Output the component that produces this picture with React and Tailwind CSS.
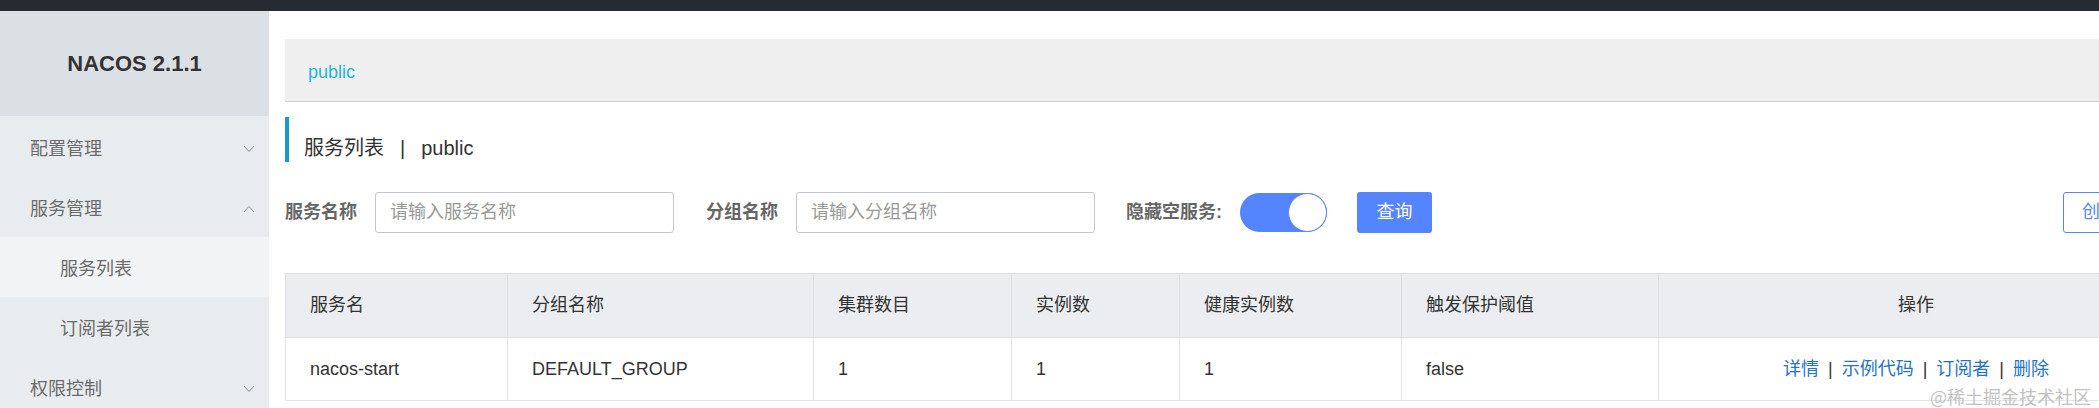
import React from "react";

const menu = [
  { label: "配置管理", chevron: "down" },
  { label: "服务管理", chevron: "up" },
  { label: "服务列表", sub: true, active: true },
  { label: "订阅者列表", sub: true },
  { label: "权限控制", chevron: "down" },
];

const columns = [
  { title: "服务名", w: "w-[222px]" },
  { title: "分组名称", w: "w-[306px]" },
  { title: "集群数目", w: "w-[198px]" },
  { title: "实例数", w: "w-[168px]" },
  { title: "健康实例数", w: "w-[222px]" },
  { title: "触发保护阈值", w: "w-[257px]" },
  { title: "操作", w: "w-[515px]", center: true },
];

const rows = [
  { name: "nacos-start", group: "DEFAULT_GROUP", clusters: 1, instances: 1, healthy: 1, threshold: "false" },
];

function Chevron({ dir }) {
  return (
    <svg width="12" height="8" viewBox="0 0 12 8" className="text-[#8c8c8c]">
      {dir === "up" ? (
        <polyline points="1,7 6,1.5 11,7" fill="none" stroke="currentColor" strokeWidth="1" />
      ) : (
        <polyline points="1,1 6,6.5 11,1" fill="none" stroke="currentColor" strokeWidth="1" />
      )}
    </svg>
  );
}

function Sidebar() {
  return (
    <aside className="w-[269px] shrink-0 flex flex-col bg-[#e9ecef]">
      <div className="h-[105px] shrink-0 bg-[#dbe0e4] flex items-center justify-center text-[22px] font-bold text-[#333]">
        NACOS 2.1.1
      </div>
      <nav className="pt-[1px] text-[18px] text-[#6b6b6b]">
        {menu.map((m) => (
          <div
            key={m.label}
            className={`h-[60px] pt-[4px] flex items-center justify-between pr-[14px] ${
              m.sub ? "pl-[60px]" : "pl-[30px]"
            } ${m.active ? "bg-[#f1f3f5]" : ""}`}
          >
            <span>{m.label}</span>
            {m.chevron && <Chevron dir={m.chevron} />}
          </div>
        ))}
      </nav>
    </aside>
  );
}

function Toggle() {
  return (
    <div className="w-[87px] h-[39px] rounded-full bg-[#5584ff] flex items-center justify-end">
      <div className="w-[39px] h-[39px] rounded-full bg-white border border-[#5584ff]" />
    </div>
  );
}

function Filters() {
  return (
    <div className="mt-[30px] h-[41px] flex items-center justify-between">
      <div className="flex items-center">
        <span className="text-[18px] font-bold text-[#666] mr-[18px]">服务名称</span>
        <div className="w-[299px] h-[41px] border border-[#c4c6cf] rounded-[3px] flex items-center pl-[14px] text-[18px] text-[#999]">
          请输入服务名称
        </div>
        <span className="ml-[32px] text-[18px] font-bold text-[#666] mr-[18px]">分组名称</span>
        <div className="w-[299px] h-[41px] border border-[#c4c6cf] rounded-[3px] flex items-center pl-[14px] text-[18px] text-[#999]">
          请输入分组名称
        </div>
        <span className="ml-[31px] text-[18px] font-bold text-[#666] mr-[18px]">隐藏空服务:</span>
        <Toggle />
        <button className="ml-[30px] w-[75px] h-[41px] rounded-[3px] bg-[#5584ff] text-white text-[18px]">查询</button>
      </div>
      <button className="h-[41px] px-[18px] rounded-[3px] border border-[#5584ff] text-[#5584ff] text-[18px]">
        创建服务
      </button>
    </div>
  );
}

function Actions() {
  const items = ["详情", "示例代码", "订阅者", "删除"];
  return (
    <div className="flex items-center justify-center">
      {items.map((t, i) => (
        <React.Fragment key={t}>
          {i > 0 && <span className="mx-[9px] text-[#333]">|</span>}
          <span className="text-[#1f74c4]">{t}</span>
        </React.Fragment>
      ))}
    </div>
  );
}

function ServiceTable() {
  return (
    <table className="mt-[40px] w-full table-fixed border-collapse text-[18px] text-[#333]">
      <colgroup>
        {columns.map((c) => (
          <col key={c.title} className={c.w} />
        ))}
      </colgroup>
      <thead>
        <tr className="h-[64px] bg-[#ebedf0]">
          {columns.map((c) => (
            <th
              key={c.title}
              className={`border border-[#dcdee3] font-normal ${c.center ? "text-center" : "text-left pl-[24px]"}`}
            >
              {c.title}
            </th>
          ))}
        </tr>
      </thead>
      <tbody>
        {rows.map((r) => (
          <tr key={r.name} className="h-[63px]">
            <td className="border border-[#e3e5e9] pl-[24px]">{r.name}</td>
            <td className="border border-[#e3e5e9] pl-[24px]">{r.group}</td>
            <td className="border border-[#e3e5e9] pl-[24px]">{r.clusters}</td>
            <td className="border border-[#e3e5e9] pl-[24px]">{r.instances}</td>
            <td className="border border-[#e3e5e9] pl-[24px]">{r.healthy}</td>
            <td className="border border-[#e3e5e9] pl-[24px]">{r.threshold}</td>
            <td className="border border-[#e3e5e9]">
              <Actions />
            </td>
          </tr>
        ))}
      </tbody>
    </table>
  );
}

export default function App() {
  return (
    <div className="relative w-[2099px] h-[408px] overflow-hidden flex flex-col bg-white font-['Liberation_Sans','Noto_Sans_CJK_SC',sans-serif]">
      <div className="h-[11px] shrink-0 bg-[#262a31]" />
      <div className="flex flex-1 min-h-0">
        <Sidebar />
        <main className="flex-1 min-w-0 pl-[16px] pt-[28px]">
          <div className="w-[1888px]">
            <div className="h-[63px] bg-[#efefef] border-b border-[#cfcfcf] flex items-center pl-[23px] pt-[4px] text-[18px] text-[#1fb6d8]">
              public
            </div>
            <div className="mt-[15px] h-[45px] border-l-4 border-[#1a9bcf] flex items-center pl-[15px] pt-[16px] text-[20px] text-[#333]">
              <span>服务列表</span>
              <span className="mx-[16px]">|</span>
              <span>public</span>
            </div>
            <Filters />
            <ServiceTable />
          </div>
        </main>
      </div>
      <div className="absolute right-[8px] bottom-[3px] text-[18px] leading-none text-[#c2c2c2] font-['Noto_Sans_CJK_SC',sans-serif]">
        @稀土掘金技术社区
      </div>
    </div>
  );
}
